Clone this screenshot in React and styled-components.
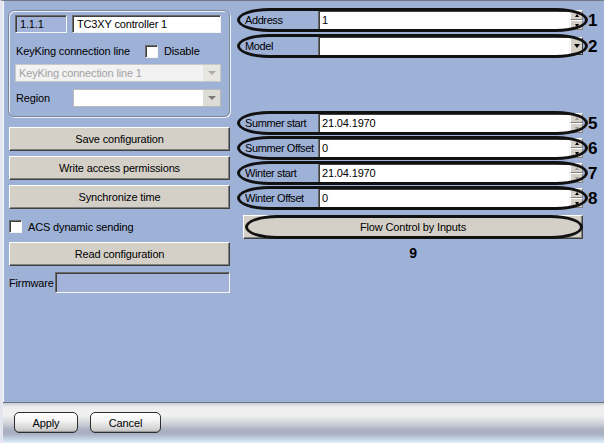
import React from 'react';
import styled, { createGlobalStyle, css } from 'styled-components';

const GlobalStyle = createGlobalStyle`
  html, body { margin: 0; padding: 0; }
  body { font-family: "Liberation Sans", Arial, sans-serif; font-size: 11px; letter-spacing: -0.15px; }
`;

const PANEL = '#9eb1d7';
const FACE = '#d4d0c8';

const Frame = styled.div`
  width: 604px;
  height: 443px;
  box-sizing: border-box;
  border-top: 1px solid #737884;
  border-left: 3px solid #e3e6ee;
  background: ${PANEL};
  display: flex;
  flex-direction: column;
  overflow: hidden;
`;

const Main = styled.div`
  flex: 1;
  display: flex;
  box-shadow: inset 1px 0 0 #f8f9fc;
`;

const LeftCol = styled.div`
  width: 222px;
  margin-left: 5px;
  padding-top: 9px;
  display: flex;
  flex-direction: column;
`;

const GroupBox = styled.div`
  border: 1px solid #7e889c;
  border-radius: 6px;
  box-shadow: 1px 1px 0 #eef1f8, inset 1px 1px 0 #eef1f8;
  padding: 4px 8px 9px 6px;
  display: flex;
  flex-direction: column;
`;

const GRow = styled.div`
  display: flex;
  align-items: center;
  height: ${p => p.$h || 18}px;
  margin-top: ${p => p.$mt || 0}px;
`;

const sunken = css`
  box-sizing: border-box;
  border-top: 1px solid #6a6a6a;
  border-left: 1px solid #6a6a6a;
  border-bottom: 1px solid #f4f4f4;
  border-right: 1px solid #f4f4f4;
  box-shadow: inset 1px 1px 0 #404040;
`;

const Field = styled.div`
  ${sunken};
  height: ${p => p.$h || 18}px;
  width: ${p => (p.$w ? `${p.$w}px` : 'auto')};
  flex: ${p => (p.$w ? 'none' : 1)};
  background: ${p => p.$bg || '#fff'};
  color: #000;
  padding-left: 4px;
  display: flex;
  align-items: center;
  white-space: nowrap;
  overflow: hidden;
  margin-left: ${p => p.$ml || 0}px;
`;

const Label = styled.span`
  color: #000;
  white-space: nowrap;
  width: ${p => (p.$w ? `${p.$w}px` : 'auto')};
  padding-left: ${p => p.$pl || 0}px;
`;

const Check = styled.span`
  ${sunken};
  width: 13px;
  height: 13px;
  background: #fff;
  display: inline-block;
  flex: none;
  margin: 0 6px 0 ${p => p.$ml || 0}px;
`;

const Combo = styled.div`
  box-sizing: border-box;
  display: flex;
  height: 18px;
  flex: 1;
  margin-left: ${p => p.$ml || 0}px;
  border: 1px solid ${p => (p.$disabled ? '#c8c8c8' : '#b9b9b9')};
  background: ${p => (p.$disabled ? '#f2f2f2' : '#fff')};
  color: ${p => (p.$disabled ? '#a2a2a2' : '#000')};
`;

const ComboText = styled.div`
  flex: 1;
  padding-left: 3px;
  display: flex;
  align-items: center;
  white-space: nowrap;
`;

const ComboBtn = styled.div`
  width: 17px;
  background: ${p => (p.$disabled ? '#e6e5e0' : '#dedcd6')};
  display: flex;
  align-items: center;
  justify-content: center;
  &::before {
    content: '';
    border-left: 4px solid transparent;
    border-right: 4px solid transparent;
    border-top: 4px solid ${p => (p.$disabled ? '#aaa' : '#7a7a7a')};
  }
`;

const Button = styled.div`
  box-sizing: border-box;
  height: 24px;
  margin-left: 1px;
  margin-top: ${p => p.$mt || 0}px;
  background: ${FACE};
  border-top: 1px solid #fff;
  border-left: 1px solid #fff;
  border-right: 1px solid #404040;
  border-bottom: 1px solid #404040;
  box-shadow: inset -1px -1px 0 #808080;
  display: flex;
  align-items: center;
  justify-content: center;
  color: #000;
  position: relative;
`;

const CheckRow = styled.div`
  display: flex;
  align-items: center;
  height: 13px;
  margin: 11px 0 0 1px;
`;

const RightCol = styled.div`
  flex: 1;
  margin-left: 10px;
  padding-top: 8px;
  display: flex;
  flex-direction: column;
`;

const Line = styled.div`
  display: flex;
  align-items: center;
  margin-top: ${p => p.$mt || 0}px;
`;

const Ellipse = css`
  &::after {
    content: '';
    position: absolute;
    top: -1px;
    bottom: -1px;
    left: ${p => (p.$flow ? 1 : -3)}px;
    right: ${p => (p.$flow ? -1 : -5)}px;
    border: 3px solid #111;
    border-radius: 32px / 50%;
    pointer-events: none;
  }
`;

const Row = styled.div`
  position: relative;
  width: 343px;
  height: 22px;
  display: flex;
  align-items: center;
  ${Ellipse};
`;

const RowLabel = styled.div`
  width: 78px;
  padding-left: 5px;
  box-sizing: border-box;
  white-space: nowrap;
  letter-spacing: -0.4px;
  color: #000;
`;

const RowField = styled(Field)`
  height: 20px;
  padding-left: 3px;
`;

const Spin = styled.div`
  width: 13px;
  height: 20px;
  display: flex;
  flex-direction: column;
`;

const SpinHalf = styled.div`
  flex: 1;
  box-sizing: border-box;
  background: ${FACE};
  border-top: 1px solid #fff;
  border-left: 1px solid #fff;
  border-right: 1px solid #808080;
  border-bottom: 1px solid #808080;
  display: flex;
  align-items: center;
  justify-content: center;
  &::before {
    content: '';
    border-left: 2.5px solid transparent;
    border-right: 2.5px solid transparent;
    ${p => (p.$up ? 'border-bottom' : 'border-top')}: 3px solid ${p => (p.$dim ? '#9a9a9a' : '#000')};
  }
`;

const DropBtn = styled.div`
  width: 13px;
  height: 18px;
  box-sizing: border-box;
  background: ${FACE};
  border-top: 1px solid #fff;
  border-left: 1px solid #fff;
  border-right: 1px solid #404040;
  border-bottom: 1px solid #404040;
  display: flex;
  align-items: center;
  justify-content: center;
  &::before {
    content: '';
    border-left: 3.5px solid transparent;
    border-right: 3.5px solid transparent;
    border-top: 4px solid #000;
  }
`;

const Num = styled.span`
  font-weight: bold;
  font-size: 17px;
  color: #000;
  margin-left: 5px;
  line-height: 1;
`;

const FlowButton = styled(Button)`
  width: 340px;
  margin-left: 3px;
  ${Ellipse};
`;

const NineRow = styled.div`
  width: 340px;
  margin-left: 3px;
  margin-top: 6px;
  text-align: center;
  font-weight: bold;
  font-size: 14px;
  color: #000;
`;

const BottomBar = styled.div`
  height: 41px;
  flex: none;
  box-sizing: border-box;
  border-top: 1px solid #6c7282;
  background: linear-gradient(
    to bottom,
    #c9ccd4 0px,
    #eeeeee 4px,
    #f1f1f1 12px,
    #d6d8de 19px,
    #aab0c0 27px,
    #a9b1c4 31px,
    #c4d4e4 36px,
    #e2f1f8 40px
  );
  display: flex;
  align-items: flex-start;
  padding: 9px 0 0 11px;
  gap: 12px;
`;

const FootButton = styled.div`
  box-sizing: border-box;
  width: ${p => p.$w}px;
  height: 21px;
  border: 1px solid #2e2e2e;
  border-radius: 5px;
  background: linear-gradient(to bottom, #ffffff 0%, #f4f4f4 40%, #d2d2d2 85%, #bcbcbc 100%);
  box-shadow: inset 0 -1px 0 #999;
  display: flex;
  align-items: center;
  justify-content: center;
  color: #000;
`;

const spinRow = (label, value, num, dim, mt) => (
  <Line $mt={mt}>
    <Row>
      <RowLabel>{label}</RowLabel>
      <RowField>{value}</RowField>
      <Spin>
        <SpinHalf $up $dim={dim} />
        <SpinHalf $dim={dim} />
      </Spin>
    </Row>
    <Num>{num}</Num>
  </Line>
);

export default function App() {
  return (
    <>
      <GlobalStyle />
      <Frame>
        <Main>
          <LeftCol>
            <GroupBox>
              <GRow>
                <Field $w={52} $bg="#a3b3d9">1.1.1</Field>
                <Field $ml={5}>TC3XY controller 1</Field>
              </GRow>
              <GRow $h={16} $mt={10}>
                <Label $pl={1}>KeyKing connection line</Label>
                <Check $ml={15} />
                <Label>Disable</Label>
              </GRow>
              <GRow $mt={5}>
                <Combo $disabled>
                  <ComboText>KeyKing connection line 1</ComboText>
                  <ComboBtn $disabled />
                </Combo>
              </GRow>
              <GRow $mt={7}>
                <Label $w={57} $pl={1}>Region</Label>
                <Combo>
                  <ComboText />
                  <ComboBtn />
                </Combo>
              </GRow>
            </GroupBox>
            <Button $mt={10}>Save configuration</Button>
            <Button $mt={5}>Write access permissions</Button>
            <Button $mt={5}>Synchronize time</Button>
            <CheckRow>
              <Check />
              <Label>ACS dynamic sending</Label>
            </CheckRow>
            <Button $mt={9}>Read configuration</Button>
            <GRow $h={21} $mt={6}>
              <Label $w={46} $pl={1}>Firmware</Label>
              <Field $h={21} $bg="#a3b3d9" />
            </GRow>
          </LeftCol>
          <RightCol>
            {spinRow('Address', '1', '1', false, 0)}
            <Line $mt={4}>
              <Row>
                <RowLabel>Model</RowLabel>
                <RowField />
                <DropBtn />
              </Row>
              <Num>2</Num>
            </Line>
            {spinRow('Summer start', '21.04.1970', '5', true, 55)}
            {spinRow('Summer Offset', '0', '6', false, 3)}
            {spinRow('Winter start', '21.04.1970', '7', true, 3)}
            {spinRow('Winter Offset', '0', '8', false, 3)}
            <FlowButton $flow $mt={6}>Flow Control by Inputs</FlowButton>
            <NineRow>9</NineRow>
          </RightCol>
        </Main>
        <BottomBar>
          <FootButton $w={64}>Apply</FootButton>
          <FootButton $w={71}>Cancel</FootButton>
        </BottomBar>
      </Frame>
    </>
  );
}
